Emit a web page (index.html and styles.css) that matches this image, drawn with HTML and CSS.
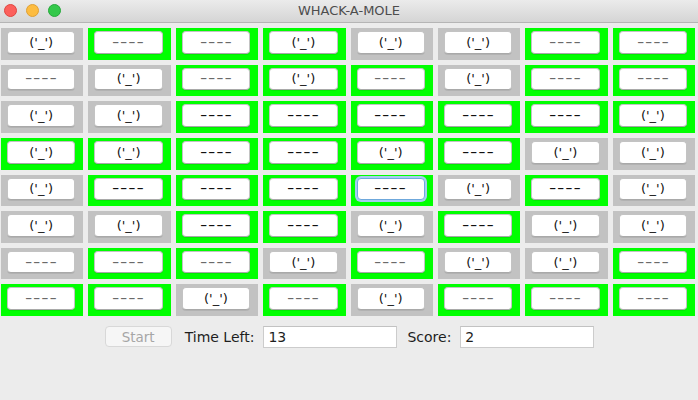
FILE: index.html
```html
<!DOCTYPE html>
<html>
<head>
<meta charset="utf-8">
<title>WHACK-A-MOLE</title>
<link rel="stylesheet" href="styles.css">
</head>
<body>
<div class="window">
  <header class="titlebar">
    <div class="lights"><span class="light red"></span><span class="light yellow"></span><span class="light green"></span></div>
    <div class="title">WHACK-A-MOLE</div>
    <div></div>
  </header>
  <main class="board">
    <!-- row 0 -->
    <div class="cell s"><div class="btn">('_')</div></div>
    <div class="cell g"><div class="btn lt"><span class="dash">----</span></div></div>
    <div class="cell g"><div class="btn lt"><span class="dash">----</span></div></div>
    <div class="cell g"><div class="btn">('_')</div></div>
    <div class="cell s"><div class="btn">('_')</div></div>
    <div class="cell s"><div class="btn">('_')</div></div>
    <div class="cell g"><div class="btn lt"><span class="dash">----</span></div></div>
    <div class="cell g"><div class="btn lt"><span class="dash">----</span></div></div>
    <!-- row 1 -->
    <div class="cell s"><div class="btn lt"><span class="dash">----</span></div></div>
    <div class="cell s"><div class="btn">('_')</div></div>
    <div class="cell g"><div class="btn lt"><span class="dash">----</span></div></div>
    <div class="cell g"><div class="btn">('_')</div></div>
    <div class="cell g"><div class="btn lt"><span class="dash">----</span></div></div>
    <div class="cell s"><div class="btn">('_')</div></div>
    <div class="cell g"><div class="btn lt"><span class="dash">----</span></div></div>
    <div class="cell g"><div class="btn lt"><span class="dash">----</span></div></div>
    <!-- row 2 -->
    <div class="cell s"><div class="btn">('_')</div></div>
    <div class="cell s"><div class="btn">('_')</div></div>
    <div class="cell g"><div class="btn"><span class="dash">----</span></div></div>
    <div class="cell g"><div class="btn"><span class="dash">----</span></div></div>
    <div class="cell g"><div class="btn"><span class="dash">----</span></div></div>
    <div class="cell g"><div class="btn"><span class="dash">----</span></div></div>
    <div class="cell g"><div class="btn"><span class="dash">----</span></div></div>
    <div class="cell g"><div class="btn">('_')</div></div>
    <!-- row 3 -->
    <div class="cell g"><div class="btn">('_')</div></div>
    <div class="cell g"><div class="btn">('_')</div></div>
    <div class="cell g"><div class="btn"><span class="dash">----</span></div></div>
    <div class="cell g"><div class="btn"><span class="dash">----</span></div></div>
    <div class="cell g"><div class="btn">('_')</div></div>
    <div class="cell g"><div class="btn"><span class="dash">----</span></div></div>
    <div class="cell s"><div class="btn">('_')</div></div>
    <div class="cell s"><div class="btn">('_')</div></div>
    <!-- row 4 -->
    <div class="cell s"><div class="btn">('_')</div></div>
    <div class="cell g"><div class="btn"><span class="dash">----</span></div></div>
    <div class="cell g"><div class="btn"><span class="dash">----</span></div></div>
    <div class="cell g"><div class="btn"><span class="dash">----</span></div></div>
    <div class="cell g"><div class="btn focus"><span class="dash">----</span></div></div>
    <div class="cell s"><div class="btn">('_')</div></div>
    <div class="cell g"><div class="btn"><span class="dash">----</span></div></div>
    <div class="cell s"><div class="btn">('_')</div></div>
    <!-- row 5 -->
    <div class="cell s"><div class="btn">('_')</div></div>
    <div class="cell s"><div class="btn">('_')</div></div>
    <div class="cell g"><div class="btn"><span class="dash">----</span></div></div>
    <div class="cell g"><div class="btn"><span class="dash">----</span></div></div>
    <div class="cell s"><div class="btn">('_')</div></div>
    <div class="cell g"><div class="btn"><span class="dash">----</span></div></div>
    <div class="cell s"><div class="btn">('_')</div></div>
    <div class="cell s"><div class="btn">('_')</div></div>
    <!-- row 6 -->
    <div class="cell s"><div class="btn lt"><span class="dash">----</span></div></div>
    <div class="cell g"><div class="btn lt"><span class="dash">----</span></div></div>
    <div class="cell g"><div class="btn lt"><span class="dash">----</span></div></div>
    <div class="cell s"><div class="btn">('_')</div></div>
    <div class="cell g"><div class="btn lt"><span class="dash">----</span></div></div>
    <div class="cell s"><div class="btn">('_')</div></div>
    <div class="cell s"><div class="btn">('_')</div></div>
    <div class="cell g"><div class="btn lt"><span class="dash">----</span></div></div>
    <!-- row 7 -->
    <div class="cell g"><div class="btn lt"><span class="dash">----</span></div></div>
    <div class="cell g"><div class="btn lt"><span class="dash">----</span></div></div>
    <div class="cell s"><div class="btn">('_')</div></div>
    <div class="cell g"><div class="btn lt"><span class="dash">----</span></div></div>
    <div class="cell s"><div class="btn">('_')</div></div>
    <div class="cell g"><div class="btn lt"><span class="dash">----</span></div></div>
    <div class="cell g"><div class="btn lt"><span class="dash">----</span></div></div>
    <div class="cell g"><div class="btn lt"><span class="dash">----</span></div></div>
  </main>
  <footer class="controls">
    <div class="start">Start</div>
    <span class="lbl">Time Left:</span>
    <div class="field">13</div>
    <span class="lbl">Score:</span>
    <div class="field last">2</div>
  </footer>
</div>
</body>
</html>
```
FILE: styles.css
```css
* { box-sizing: border-box; }
html, body { margin: 0; padding: 0; }
body {
  background: #ececec;
  font-family: "DejaVu Sans", "Liberation Sans", sans-serif;
  font-size: 13px;
  color: #1e1e1e;
}
.window {
  width: 698px;
  height: 400px;
  display: flex;
  flex-direction: column;
  overflow: hidden;
}
.titlebar {
  height: 23px;
  flex: none;
  display: grid;
  grid-template-columns: 1fr auto 1fr;
  align-items: center;
  background: linear-gradient(#ebebeb, #d5d5d5);
  border-bottom: 1px solid #b5b5b5;
}
.lights {
  display: flex;
  gap: 9px;
  padding-left: 4px;
  padding-bottom: 1px;
}
.light {
  width: 13px;
  height: 13px;
  border-radius: 50%;
}
.red { background: #fc605c; border: 1px solid #e0453f; }
.yellow { background: #fdbc40; border: 1px solid #dfa034; }
.green { background: #34c84a; border: 1px solid #25a93a; }
.title {
  color: #4d4d4d;
  font-size: 13px;
  padding-bottom: 1px;
}
.board {
  flex: none;
  height: 293px;
  padding: 5px 3px 0 1px;
  display: grid;
  grid-template-columns: repeat(8, 1fr);
  grid-template-rows: repeat(8, 1fr);
  gap: 5px;
}
.cell {
  display: flex;
  padding: 3px 8px 6px 6px;
}
.cell.g { background: #00ff00; }
.cell.s { background: #c2c2c2; }
.btn {
  flex: 1;
  display: flex;
  align-items: center;
  justify-content: center;
  background: #ffffff;
  border: 1px solid #c3c3c3;
  border-bottom-color: #a9a9a9;
  border-radius: 4px;
  box-shadow: 0 1px 0 rgba(0, 0, 0, 0.08);
  color: #111;
  font-size: 13px;
  line-height: 1;
  white-space: nowrap;
}
.btn.lt { color: #6a6a6a; }
.btn.focus {
  border-color: #6fa8dc;
  box-shadow: 0 0 0 2px #a6cdf0;
}
.dash {
  display: inline-block;
  font-size: 14px;
  letter-spacing: 0.6px;
  transform: scaleX(1.45);
  margin-top: -1px;
}
.controls {
  flex: 1;
  display: flex;
  justify-content: center;
  align-items: flex-start;
  padding-top: 10px;
  padding-left: 1px;
}
.start {
  width: 67px;
  height: 21px;
  margin-right: 13px;
  display: flex;
  align-items: center;
  justify-content: center;
  background: #f6f6f6;
  border: 1px solid #d8d8d8;
  border-radius: 4px;
  color: #a6a6a6;
  font-size: 13.5px;
}
.lbl {
  height: 22px;
  line-height: 22px;
  margin-right: 9px;
  color: #1e1e1e;
  font-size: 14px;
}
.field {
  width: 134px;
  height: 22px;
  line-height: 20px;
  padding-left: 4px;
  margin-right: 10px;
  background: #ffffff;
  border: 1px solid #cccccc;
  border-top-color: #c2c2c2;
  color: #1e1e1e;
  font-size: 14px;
}
.field.last { margin-right: 0; }
```
